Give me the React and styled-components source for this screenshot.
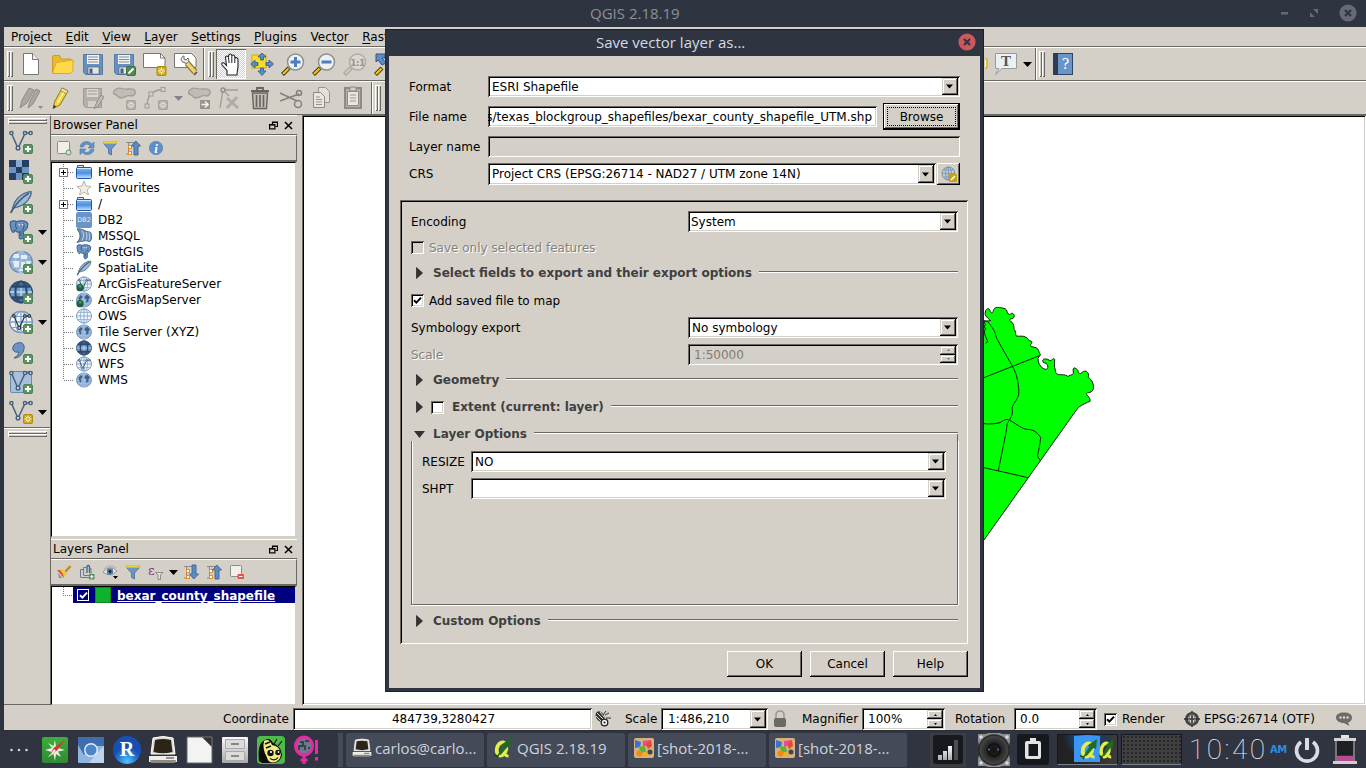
import React from "react";
import styled, { createGlobalStyle, css } from "styled-components";

const FACE = "#d4d0c8";
const SHADE = "#6a6864";
const NAVY = "#2f3540";

const sunken = css`
  box-shadow: inset 1px 1px 0 ${SHADE}, inset -1px -1px 0 #fff, inset 2px 2px 0 #000, inset -2px -2px 0 ${FACE};
`;
const raised = css`
  box-shadow: inset -1px -1px 0 #000, inset 1px 1px 0 ${FACE}, inset -2px -2px 0 ${SHADE}, inset 2px 2px 0 #fff;
`;

const Global = createGlobalStyle`
  *, *::before, *::after { box-sizing: border-box; }
  body { margin: 0; overflow: hidden; font: 12px/16px "DejaVu Sans", sans-serif; color: #000; }
  svg { display: block; flex: none; }
  u { text-underline-offset: 2px; text-decoration-skip-ink: none; text-decoration-thickness: 1px; }
`;

/* ---------- window shell ---------- */
const Desktop = styled.div`
  position: relative;
  width: 1366px;
  height: 768px;
  overflow: hidden;
  display: flex;
  flex-direction: column;
  background: ${NAVY};
`;
const TitleBar = styled.header`
  height: 27px;
  flex: none;
  display: flex;
  align-items: center;
  padding: 0 9px 1px 590px;
  font: 15px/20px "Open Sans", sans-serif;
  color: #8b909c;
`;
const WindowButtons = styled.div`
  margin-left: auto;
  display: flex;
  align-items: center;
  gap: 21px;
`;
const AppWindow = styled.main`
  height: 703px;
  flex: none;
  margin-left: 4px;
  background: ${FACE};
  display: flex;
  flex-direction: column;
`;
const MenuBar = styled.nav`
  height: 20px;
  flex: none;
  display: flex;
  gap: 13.5px;
  padding: 2px 0 0 7px;
  border-bottom: 1px solid ${SHADE};
  white-space: nowrap;
`;
const ToolBar = styled.div`
  height: 34px;
  flex: none;
  display: flex;
  align-items: center;
  border-top: 1px solid #fff;
  border-bottom: 1px solid ${SHADE};
`;
const ToolGroup = styled.div`
  height: 32px;
  width: ${(p) => (p.$w ? p.$w + "px" : "auto")};
  flex: none;
  display: flex;
  align-items: center;
  padding-left: ${(p) => p.$pl ?? 3}px;
  overflow: hidden;
  border-left: ${(p) => (p.$first ? "0" : "1px solid #fff")};
  border-right: ${(p) => (p.$last ? "0" : `1px solid ${SHADE}`)};
`;
const Spacer = styled.div`
  flex: 1;
`;
const Handle = styled.div`
  flex: none;
  display: flex;
  flex-direction: ${(p) => (p.$flat ? "column" : "row")};
  width: ${(p) => (p.$flat ? "39px" : "6px")};
  height: ${(p) => (p.$flat ? "6px" : "26px")};
  margin: ${(p) => p.$m || "0 2px 0 0"};
  &::before, &::after {
    content: "";
    flex: 1;
    box-shadow: inset 1px 1px 0 #fff, inset -1px -1px 0 ${SHADE};
  }
`;
const ToolSlot = styled.div`
  width: ${(p) => p.$w || 31}px;
  height: 30px;
  flex: none;
  display: flex;
  align-items: center;
  justify-content: center;
  opacity: ${(p) => (p.$off ? 0.75 : 1)};
  ${(p) =>
    p.$down &&
    css`
      background: repeating-conic-gradient(#fff 0 25%, ${FACE} 0 50%) 0 0 / 2px 2px;
      box-shadow: inset 1px 1px 0 ${SHADE}, inset -1px -1px 0 #fff;
    `}
`;
const Body = styled.div`
  height: 590px;
  flex: none;
  display: flex;
`;
const SideBar = styled.aside`
  width: 47px;
  flex: none;
  border-top: 1px solid #fff;
  border-right: 1px solid ${SHADE};
  border-bottom: 1px solid ${SHADE};
`;
const SideSlot = styled.div`
  height: 30px;
  display: flex;
  align-items: center;
  gap: 5px;
  padding-left: 5px;
`;
const SideEnd = styled.div`
  border-top: 1px solid ${SHADE};
  box-shadow: inset 0 1px 0 #fff;
  padding-top: 1px;
`;
const Docks = styled.section`
  width: 246px;
  flex: none;
  display: flex;
  flex-direction: column;
  gap: 2px;
`;
const Dock = styled.div`
  height: ${(p) => p.$h}px;
  flex: none;
  display: flex;
  flex-direction: column;
`;
const DockTitle = styled.div`
  height: 20px;
  flex: none;
  display: flex;
  align-items: center;
  padding: 0 4px 0 2px;
  border-top: 1px solid #fff;
  border-bottom: 1px solid ${SHADE};
  svg:first-of-type { margin-left: auto; margin-right: 6px; }
`;
const DockTools = styled.div`
  height: 27px;
  flex: none;
  display: flex;
  align-items: center;
  gap: 7px;
  padding-left: 5px;
  border-right: 1px solid ${SHADE};
  border-bottom: 2px solid ${SHADE};
  border-top: 1px solid #fff;
`;
const MenuArrow = styled.span`
  margin: 0 -2px;
`;
const Tree = styled.div`
  flex: 1;
  background: #fff;
  border-top: 1px solid #000;
  border-left: 1px solid #000;
  border-right: 1px solid ${FACE};
  border-bottom: 1px solid ${FACE};
  margin-right: 1px;
  padding-top: ${(p) => p.$top}px;
`;
const TreeRow = styled.div`
  height: 16px;
  display: flex;
  align-items: center;
`;
const TreeLabel = styled.span`
  padding-left: 6px;
  white-space: nowrap;
`;
const LayerRow = styled.div`
  flex: 1;
  height: 16px;
  overflow: hidden;
  display: flex;
  align-items: center;
  gap: 7px;
  padding-left: 4px;
  background: #000080;
  color: #fff;
`;
const LayerName = styled.b`
  padding-top: 1px;
  text-decoration: underline;
  text-decoration-skip-ink: none;
`;
const Swatch = styled.i`
  width: 16px;
  height: 16px;
  margin: 0 -1px;
  background: #0eb22c;
  border: 1px solid #0a8a20;
`;
const Canvas = styled.div`
  flex: 1;
  margin-left: 5px;
  background: #fff;
  overflow: hidden;
  ${sunken}
`;
const StatusBar = styled.footer`
  height: 25px;
  flex: none;
  display: flex;
  align-items: center;
  padding: 3px 14px 0 219px;
  white-space: nowrap;
`;
const StatusText = styled.span`
  width: ${(p) => p.$w}px;
  flex: none;
`;
const Indent = styled.span`
  display: inline-block;
  flex: none;
  width: ${(p) => (p.$w ? p.$w + "px" : "auto")};
  margin-left: ${(p) => (p.$w ? 0 : 10)}px;
`;

/* ---------- form parts ---------- */
const Box = styled.div`
  width: ${(p) => p.$w}px;
  height: ${(p) => p.$h || 21}px;
  flex: none;
  display: flex;
  align-items: center;
  justify-content: ${(p) => p.$align || "flex-start"};
  padding: 2px 2px 2px ${(p) => p.$pad ?? 4}px;
  background: ${(p) => (p.$off ? FACE : "#fff")};
  color: ${(p) => (p.$off ? "#807d78" : "#000")};
  overflow: hidden;
  white-space: nowrap;
  ${sunken}
`;
const DropButton = styled.div`
  width: 16px;
  align-self: stretch;
  margin-left: auto;
  padding-right: 1px;
  flex: none;
  display: flex;
  align-items: center;
  justify-content: center;
  background: ${FACE};
  ${raised}
`;
const SpinColumn = styled.div`
  width: 16px;
  align-self: stretch;
  margin-left: auto;
  flex: none;
  display: flex;
  flex-direction: column;
`;
const SpinButton = styled.div`
  flex: 1;
  display: flex;
  align-items: center;
  justify-content: center;
  background: ${FACE};
  ${raised}
`;
const Check = styled.div`
  width: 13px;
  height: 13px;
  flex: none;
  display: flex;
  align-items: center;
  justify-content: center;
  background: ${(p) => (p.$off ? FACE : "#fff")};
  ${sunken}
`;
const LayerCheck = styled.div`
  width: 12px;
  height: 12px;
  flex: none;
  border: 1px solid #fff;
  display: flex;
  align-items: center;
  justify-content: center;
`;
const PushButton = styled.button`
  width: ${(p) => p.$w}px;
  height: ${(p) => p.$h || 26}px;
  padding: 0;
  border: 0;
  background: ${FACE};
  font: inherit;
  display: flex;
  align-items: center;
  justify-content: center;
  box-shadow: inset -1px -1px 0 #000, inset 1px 1px 0 #fff, inset -2px -2px 0 ${SHADE};
  ${(p) =>
    p.$focus &&
    css`
      border: 1px solid #000;
      outline: 1px dotted #000;
      outline-offset: -5px;
    `}
`;

/* ---------- dialog ---------- */
const Dialog = styled.div`
  position: absolute;
  left: 385px;
  top: 29px;
  width: 599px;
  height: 663px;
  background: ${NAVY};
  border: 1px solid #1c2027;
  border-left-color: #262b34;
  padding: 0 3px 3px;
`;
const DialogTitle = styled.div`
  height: 26px;
  display: flex;
  align-items: center;
  padding: 0 4px 2px 207px;
  font: 15px/20px "Open Sans", sans-serif;
  color: #d3dae3;
  svg { margin-left: auto; }
`;
const DialogBody = styled.div`
  height: 632px;
  background: ${FACE};
  padding: 20px 12px 0 11px;
`;
const TopForm = styled.div`
  padding: 0 8px 0 9px;
`;
const Row = styled.div`
  height: ${(p) => p.$h}px;
  margin-bottom: ${(p) => p.$mb || 0}px;
  display: flex;
  align-items: center;
`;
const Label = styled.span`
  width: ${(p) => p.$w}px;
  flex: none;
  white-space: nowrap;
  ${(p) =>
    p.$off &&
    css`
      color: #85827c;
      text-shadow: 1px 1px 0 #fff;
    `}
`;
const Tail = styled.span`
  padding-right: 3px;
`;
const Frame = styled.div`
  height: 444px;
  margin-top: 15px;
  padding: 11px 10px 0 11px;
  ${sunken}
`;
const GroupHead = styled.div`
  height: 16px;
  margin: ${(p) => p.$m};
  display: flex;
  align-items: center;
  padding-left: 5px;
  font-weight: bold;
  color: #3f3f3f;
  white-space: nowrap;
  ${(p) =>
    p.$open &&
    css`
      background: linear-gradient(${SHADE}, ${SHADE}) 100% 6px / 1px 10px no-repeat;
    `}
  &::after {
    content: "";
    flex: 1;
    height: 2px;
    margin: 0 0 2px 7px;
    border-top: 1px solid ${SHADE};
    border-bottom: 1px solid #fff;
  }
`;
const GroupName = styled.span`
  padding-left: ${(p) => p.$pl || 10}px;
`;
const OptionBox = styled.div`
  height: 164px;
  padding: 10px 0 0 10px;
  border: 1px solid ${SHADE};
  border-top: 0;
  box-shadow: inset 1px 0 0 #fff, 0 1px 0 #fff, 1px 0 0 #fff;
`;
const DialogButtons = styled.div`
  display: flex;
  justify-content: flex-end;
  gap: 8px;
  padding-top: 7px;
`;

/* ---------- task bar ---------- */
const TaskBar = styled.div`
  height: 38px;
  display: flex;
  align-items: center;
  padding-left: 8px;
  background: #2f3440;
  border-top: 1px solid #2a2f39;
`;
const Launchers = styled.div`
  display: flex;
  align-items: center;
  gap: 6px;
  width: 330px;
  flex: none;
  svg:first-child { margin-right: 4px; }
`;
const Divider = styled.i`
  width: 5px;
  height: 34px;
  margin-right: 3px;
  background: #454a57;
`;
const Task = styled.div`
  width: 138px;
  height: 34px;
  flex: none;
  margin-right: 3px;
  padding: 0 0 3px 6px;
  display: flex;
  align-items: center;
  gap: ${(p) => p.$gap || 3}px;
  background: #454a59;
  border-radius: 2px;
  color: #cdd3de;
  font: 15px/20px "Open Sans", sans-serif;
  white-space: nowrap;
`;
const Tray = styled.div`
  flex: 1;
  display: flex;
  align-items: center;
  padding-left: 20px;
`;
const Clock = styled.div`
  width: 76px;
  margin-left: 7px;
  font: 100 28px/32px Roboto, sans-serif;
  color: #eef1f6;
  display: flex;
  justify-content: space-between;
`;
const Meridiem = styled.span`
  margin: 0 8px 0 5px;
  width: 16px;
  font: bold 10px/12px "DejaVu Sans", sans-serif;
  letter-spacing: -0.6px;
  color: #2d8ce0;
`;
const Pager = styled.div`
  width: 61px;
  height: 31px;
  flex: none;
  margin-left: ${(p) => p.$ml}px;
  border: 1px solid #15181d;
  border-bottom: 1px solid #7c8088;
  display: flex;
  justify-content: center;
  background: ${(p) =>
    p.$active
      ? "radial-gradient(ellipse at 50% 0, #3aa0ff 0, #1c3c5c 35%, transparent 60%), linear-gradient(90deg, #222 0 25%, #3c3c3c)"
      : "radial-gradient(#262626 30%, transparent 50%) 0 0 / 4px 4px, #404040"};
`;

/* ---------- small drawings ---------- */
const Pic = ({ w = 24, h = w, box, children }) => (
  <svg width={w} height={h} viewBox={box || `0 0 ${w} ${h}`} fill="none">
    {children}
  </svg>
);
const Down = ({ w = 9, c = "#000" }) => (
  <Pic w={w} h={5} box="0 0 9 5"><path d="M0 0H9L4.5 5Z" fill={c} /></Pic>
);
const Tick = ({ c = "#000" }) => (
  <Pic w={9} h={9}><path d="M1 4.2 3.4 6.6 8 1.6" stroke={c} strokeWidth="2" /></Pic>
);
const Combo = ({ w, h, children, pad, off }) => (
  <Box $w={w} $h={h} $pad={pad} $off={off}>
    {children}
    <DropButton><Down w={7} /></DropButton>
  </Box>
);
const Spin = ({ w, h, off, pad = 6, children }) => (
  <Box $w={w} $h={h} $off={off} $pad={pad}>
    {children}
    <SpinColumn>
      <SpinButton><Pic w={3} h={2}><path d="M0 2H3L1.5 0Z" fill={off ? "#777" : "#000"} /></Pic></SpinButton>
      <SpinButton><Pic w={3} h={2}><path d="M0 0H3L1.5 2Z" fill={off ? "#777" : "#000"} /></Pic></SpinButton>
    </SpinColumn>
  </Box>
);
const Plus = () => (
  <g>
    <rect x="14.5" y="14.5" width="9" height="9" rx="1.5" fill="#5a9460" stroke="#4c8352" />
    <path d="M19 16v6M16 19h6" stroke="#fff" strokeWidth="2" />
  </g>
);
const Star = ({ x = 14, y = 14, gray }) => (
  <g transform={`translate(${x} ${y})`}>
    <rect x=".5" y=".5" width="9" height="9" rx="1" fill={gray ? "#a5a29c" : "#cca30e"} stroke={gray ? "#97948e" : "#b08c0a"} />
    <path d="M5 1.5v7M1.5 5h7M2.5 2.5l5 5M7.5 2.5l-5 5" stroke="#fff" />
    <circle cx="5" cy="5" r="1" fill={gray ? "#a5a29c" : "#cca30e"} />
  </g>
);
const VectorV = ({ c = "#43617f" }) => (
  <g stroke={c} strokeWidth="1.5">
    <path d="M3 4.5 8.2 16.5M9.8 16.5 15.5 4.5M17 3h3" />
    <circle cx="2.4" cy="3" r="1.6" fill="#eef3f8" /><circle cx="16" cy="3" r="1.6" fill="#eef3f8" />
    <circle cx="21.6" cy="3" r="1.6" fill="#eef3f8" /><circle cx="9" cy="18" r="1.8" fill="#eef3f8" />
  </g>
);
const GlobeShape = ({ kind }) => {
  const dark = kind === "dark";
  const light = kind === "light";
  const line = dark ? "#2c4a6e" : light ? "#7ea4cf" : "#a9c3e0";
  return (
    <g>
      <ellipse cx="12" cy="12" rx="11.3" ry="10.6" fill={dark ? "#6f9acb" : light ? "#f2f6fa" : "#8fb0d6"} stroke={dark ? "#2c4a6e" : "#6d8fb8"} strokeWidth="1.3" />
      <path d="M1 12h22M12 1.5v21" stroke={dark ? "#c9daec" : line} strokeWidth="1.3" />
      <ellipse cx="12" cy="12" rx="5.6" ry="10.6" stroke={line} strokeWidth={dark ? 2 : 1.2} />
      <path d="M3 6.5h18M3 17.5h18" stroke={line} strokeWidth={dark ? 2.5 : 1.2} />
      {dark && <path d="M6 2.5h12l3 4H3ZM6 21.5h12l3-4H3Z" fill="#2c4a6e" opacity=".7" />}
      {kind === "land" && (
        <path d="M4 8 7 5l3 1-1 3-2 1 1 3-1 3-2-3-1-3ZM13 6l4-2 4 4-2 2 0 3-3 4-1-3 1-3-3-1Z" fill="#3e6186" />
      )}
      {kind === "image" && (
        <path d="M5 4h5v4H4ZM12 5h6v4h-6ZM4 11h6v6H5ZM12 12h4v6h-4ZM17.500 11h4v4h-4ZM10 19h6v2h-6Z" fill="#e4edf6" />
      )}
    </g>
  );
};
const Feather = () => (
  <g>
    <path d="M3 22C4 11 11 3 22 1.500C23 6 20 8 19 10 15 16 9 17 5 18" fill="#9fbbda" stroke="#43617f" strokeWidth="1.2" />
    <path d="M1.500 23C6 15 12 8 20 3" stroke="#43617f" strokeWidth="1.6" />
  </g>
);
const Elephant = () => (
  <g>
    <path d="M2 2C5 .5 8 1.500 9 2 12 .5 20 .5 22 4 22.500 9 20 12 17 13.500V20C16 23 12 23 12 20V14C9 15 8 13 7 12 6 16 4 15 3 12 1.500 8 1 4 2 2Z" fill="#6b93c2" stroke="#3d5f86" strokeWidth="1.4" />
    <path d="M8.500 3C7 6 8 9 9.500 11M17 4c2 3 0 7-2 8.500M14 13v6" stroke="#3d5f86" strokeWidth="1.4" />
    <circle cx="12" cy="5.500" r=".9" fill="#fff" /><circle cx="16" cy="5.500" r=".9" fill="#fff" />
  </g>
);
const TreePic = ({ kind }) => {
  switch (kind) {
    case "folder":
      return <Pic w={16}><path d="M1.500 4V1.500h6V4" fill="#dceaf8" stroke="#1d5fb4" /><rect x=".5" y="3.500" width="15" height="11" rx="1" fill="url(#folder)" stroke="#1b58ae" /><path d="M1 4.500h14" stroke="#d5e8fb" /></Pic>;
    case "star":
      return <Pic w={16}><path d="m8 1 2 5 5.200.4-4 3.400 1.300 5.100L8 12.200 3.500 14.900l1.300-5.100-4-3.400L6 6Z" fill="#efeee6" stroke="#b6b5a0" /></Pic>;
    case "db2":
      return <Pic w={16}><rect width="16" height="16" rx="2" fill="#6a94c6" /><text x="8" y="9.500" textAnchor="middle" fontSize="6.500" fontFamily="DejaVu Sans" fill="#eaf1f8">DB2</text></Pic>;
    case "mssql":
      return <Pic w={16}><path d="M1 1C6 0 9 4 14 4 16.500 7 16 11 14 13.500 10 12 6 13 1 14.500 5 10 5 6 1 1Z" fill="#6b8fbb" stroke="#45668c" /><path d="M6 2.500c2 3 2 6 0 10M10 4c1.500 3 1 6 0 8.500M13 4.500c1 3 1 5 0 8" stroke="#c8d8ea" /></Pic>;
    case "pg":
      return <Pic w={16} box="0 0 24 24"><Elephant /></Pic>;
    case "feather":
      return <Pic w={16} box="0 0 24 24"><Feather /></Pic>;
    default: {
      const [globe, extra] = kind.split("+");
      return (
        <Pic w={16} box="0 0 24 24">
          <GlobeShape kind={globe} />
          {extra && extra.includes("v") && <g transform="translate(3 4) scale(.8)"><VectorV c="#2f4862" /></g>}
          {extra && extra.includes("e") && <g><circle cx="6" cy="17.500" r="5.500" fill="#1d5d4a" /><path d="M3 15l4-2 2 3-3 2ZM6 21l4-2" fill="#3da33a" /></g>}
        </Pic>
      );
    }
  }
};
const Floppy = ({ c = "#6590c2", children }) => (
  <Pic w={24}>
    <path d="M2.500 2.500h19v20h-17l-2-2Z" fill={c} stroke="#5a7ba5" />
    <rect x="6" y="3" width="12" height="9" fill="#f4f4f2" />
    <path d="M7 5h10M7 7.500h10M7 10h10" stroke="#8a8a88" />
    <rect x="7" y="15" width="11" height="7" fill="#e4e4e2" stroke="#555" strokeWidth=".6" />
    <rect x="8.500" y="16.500" width="3" height="5" fill="#3f6288" />
    {children}
  </Pic>
);
const Lens = ({ sign, gray }) => (
  <Pic w={24}>
    <path d="M1.500 22.500 8 16" stroke={gray ? "#8f8c87" : "#3a3000"} strokeWidth="4" />
    <path d="M2 22 7.500 16.500" stroke={gray ? "#cac7c0" : "#f3bf1c"} strokeWidth="2.400" />
    <circle cx="14.500" cy="10" r="8" fill={gray ? "#dedbd5" : "#eef1f2"} stroke={gray ? "#a5a29c" : "#8b9092"} strokeWidth="1.500" />
    {sign === "1" ? (
      <text x="14.500" y="13.500" textAnchor="middle" fontSize="9" fontWeight="bold" fontFamily="DejaVu Sans" letterSpacing="-.6" fill="#85827d">1:1</text>
    ) : (
      <path d={sign === "+" ? "M14.500 5v10M9.500 10h10" : "M9.500 10h10"} stroke="#4d7fba" strokeWidth="3" />
    )}
  </Pic>
);
const Funnel = () => (
  <Pic w={16}><path d="M1.500 3.500h13L9.500 9v6l-3-1.500V9Z" fill="#6d95c4" stroke="#557aa5" /><path d="M1 2.500h14" stroke="#d9b81c" strokeWidth="3" /><path d="M2 2.200h12" stroke="#f6e04c" /></Pic>
);
const TreeArrow = ({ up }) => (
  <Pic w={16}>
    <path d="M1 2.500h8M3.500 3v10M1 14h2" stroke="#8a8a86" />
    <rect x="3.500" y="5.500" width="3" height="3" fill="#fff" stroke="#f08a1c" /><rect x="3.500" y="11.500" width="3" height="3" fill="#fff" stroke="#f08a1c" />
    <path transform={up ? "" : "matrix(1 0 0 -1 0 16)"} d="M10.800 1 15.500 6H13v9H9V6H6.500Z" fill="#5b8dc4" stroke="#3c638f" strokeWidth=".9" />
  </Pic>
);
const Blob = ({ children }) => (
  <Pic w={24}><path d="M2 8C0 4 6 1 10 2.500 14 4 18 2 22 3.500 25 7 22 10 19 10 15 8 13 12 9 12 5 12 7 9 2 8Z" fill="#bab7b0" stroke="#8f8c86" strokeWidth="1.300" />{children}</Pic>
);
const FloatPic = () => (
  <Pic w={9}><path d="M3 1.500h5.500V5.500H6.500M3.500 1v2.500M3 1h6" stroke="#000" strokeWidth="1.200" /><rect x=".6" y="3.600" width="5.300" height="4.300" stroke="#000" strokeWidth="1.200" /><path d="M0 4h6" stroke="#000" /></Pic>
);
const ClosePic = () => <Pic w={9}><path d="M1 1 8 8M8 1 1 8" stroke="#000" strokeWidth="1.500" /></Pic>;
const RoundClose = ({ c, x = NAVY }) => (
  <Pic w={18}><circle cx="9" cy="9" r="8.600" fill={c} /><path d="M6 6l6 6M12 6l-6 6" stroke={x} strokeWidth="2.200" /></Pic>
);
const Right = () => <Pic w={7} h={12}><path d="M.5 .5 6.500 6 .5 11.500Z" fill="#333" stroke="#111" strokeWidth=".6" /></Pic>;
const QgisShape = () => (
  <g>
    <ellipse cx="8.500" cy="11" rx="4.600" ry="6.800" stroke="#e3ee4a" strokeWidth="3.800" transform="rotate(14 8.500 11)" />
    <path d="M8 14c3 0 4 4.500 7.500 4" stroke="#e3ee4a" strokeWidth="3" />
    <path d="M4 18 10.500 7.500 8.500 6.500 18 0 17 10 14.500 9 8 16.500Z" fill="#1f6b26" />
    <path d="M1 17l4 1-1 2" stroke="#174f1d" strokeWidth="1.500" />
  </g>
);
const PaintPic = () => (
  <Pic w={20}><rect width="20" height="20" rx="2" fill="#d8b07a" /><path d="M1 2 7 4 6 9 1 10Z" fill="#3574d4" /><path d="M9 3l8-1-2 5-6 2Z" fill="#e64b9c" /><path d="M12 6l5-4 1 6-4 3Z" fill="#e84830" /><path d="M5 8l6 1 1 5-6 1Z" fill="#4fb73c" /><circle cx="5.500" cy="15.500" r="3" fill="#f58a12" /><circle cx="11" cy="16" r="2.200" fill="#f5b112" /><circle cx="16" cy="14" r="2.500" fill="#3c4658" /></Pic>
);
const TerminalPic = ({ w }) => (
  <Pic w={w} box="0 0 30 28"><path d="M5 2Q15-1 25 2l2 16H3Z" fill="#dedbd2" stroke="#fff" /><path d="M7 4Q15 2 23 4l1.500 12Q15 18.500 5.500 16Z" fill="#2b2519" /><path d="M1 20h28v6H1Z" fill="#f0eee8" /><path d="M2 24h26l-1 3H3Z" fill="#8d8a84" /><path d="M18 22h8" stroke="#333" /></Pic>
);

const menus = [["Pro", "j", "ect"], ["", "E", "dit"], ["", "V", "iew"], ["", "L", "ayer"], ["", "S", "ettings"], ["", "P", "lugins"], ["Vect", "o", "r"], ["", "R", "aster"]];
const browserRows = [
  ["Home", "folder", true], ["Favourites", "star"], ["/", "folder", true], ["DB2", "db2"], ["MSSQL", "mssql"], ["PostGIS", "pg"],
  ["SpatiaLite", "feather"], ["ArcGisFeatureServer", "light+ve"], ["ArcGisMapServer", "land+e"], ["OWS", "light"],
  ["Tile Server (XYZ)", "land"], ["WCS", "dark"], ["WFS", "light+v"], ["WMS", "land"],
];
const sideTools = [
  { pic: <VectorV /> },
  { pic: <g><rect x="0" y="0" width="20" height="20" fill="#6b93c5" /><path d="M0 0h7v7H0ZM13 0h7v7h-7ZM7 7h6v6H7ZM0 13h7v7H0ZM13 13h7v7h-7Z" fill="#263f5e" /><path d="M7 0h6v7H7Z" fill="#88a9d2" /></g> },
  { pic: <Feather /> },
  { pic: <g transform="scale(.85)"><Elephant /></g>, menu: true },
  { pic: <GlobeShape kind="image" />, menu: true },
  { pic: <GlobeShape kind="dark" /> },
  { pic: <g><GlobeShape kind="light" /><g transform="translate(3 3.500) scale(.8)"><VectorV c="#26333f" /></g></g>, menu: true },
  { pic: <path d="M9 3C14 1 17 6 14 12 12 16 9 18 5 18c3-2 5-4 5-6C5 13 3 10 4 7 5 4 7 3 9 3Z" fill="#6b93c5" stroke="#43617f" /> },
  { pic: <g><rect x="1.500" y="1.500" width="21" height="21" rx="1.500" fill="#a9c0da" stroke="#6b89ab" /><VectorV c="#43617f" /></g> },
  { pic: <VectorV />, menu: true, star: true },
];

const Expander = ({ open, last }) => (
  <Pic w={24} h={16}>
    <path d={`M11.500 0V${last ? 8 : 16}M12 8.500h9`} stroke="#777" strokeDasharray="1 1" />
    {open && <g><rect x="7.500" y="4.500" width="8" height="8" fill="#fff" stroke="#777" /><path d="M9 8.500h5M11.500 6v5" stroke="#000" /></g>}
  </Pic>
);

const CountyMap = () => (
  <svg width="1062" height="589" viewBox="302 115 1062 589" fill="none">
    <g transform="translate(960 290) scale(.33333)" stroke="#101810" strokeWidth="3" strokeLinejoin="round">
      <path fill="#0f0" d="M60 95 92 92C85 85 72 78 76 66C78 55 88 52 90 62C92 70 98 72 100 62C103 50 112 52 122 53L135 56C142 60 140 66 145 72C150 78 152 68 158 70C165 74 164 84 156 86C148 86 146 92 152 94C160 98 162 106 162 118C168 122 166 132 168 138C178 140 190 136 198 142C206 146 206 154 212 153C218 154 216 160 212 164C210 172 220 170 228 173C236 176 236 186 241 194L234 205C234 220 240 230 252 237C262 240 266 234 262 224C258 216 248 222 248 212C250 204 262 206 270 212C276 212 280 202 284 208C284 220 282 230 286 240C286 250 290 255 304 254C312 254 322 256 324 260C330 252 342 258 340 246C338 238 340 232 346 234C350 240 356 238 354 246C360 254 362 250 368 246C376 240 384 244 386 256C382 262 390 264 396 274C402 284 402 298 396 304C388 310 376 306 380 314C386 320 392 326 390 334C380 338 370 342 355 352L72 750H60Z" />
      <path d="M72 92C85 93 90 102 104 125L110 145L158 230C172 255 178 290 176 315C168 335 160 340 156 355C160 370 154 380 148 392C138 400 142 410 138 428L115 542M72 263 241 196M72 401C90 404 110 400 120 398C135 388 142 385 152 393C170 400 175 412 200 418C225 418 232 430 242 442C240 465 236 480 232 498L240 511M72 533 204 563M72 95l4 8-3 6 3 8-3 8 2 10 8 20-6 5" />
    </g>
  </svg>
);

const Defs = () => (
  <svg width="0" height="0" style={{ position: "absolute" }}>
    <defs>
      <linearGradient id="folder" x2="0" y2="1"><stop stopColor="#8cbdf2" /><stop offset=".5" stopColor="#4c8fe0" /><stop offset="1" stopColor="#cfe4fa" /></linearGradient>
      <linearGradient id="green" x2="0" y2="1"><stop stopColor="#3fae3b" /><stop offset="1" stopColor="#2f8a34" /></linearGradient>
      <radialGradient id="blue" cy=".9"><stop stopColor="#4cc4ff" /><stop offset="1" stopColor="#174fb4" /></radialGradient>
      <linearGradient id="metal" x2="0" y2="1"><stop stopColor="#fafafa" /><stop offset="1" stopColor="#a9a9a9" /></linearGradient>
      <radialGradient id="cone"><stop stopColor="#111" /><stop offset=".5" stopColor="#252525" /><stop offset="1" stopColor="#4a4a4a" /></radialGradient>
    </defs>
  </svg>
);

function TopToolbars() {
  return (
    <>
      <ToolBar>
        <ToolGroup $first $w={200}>
          <Handle />
          <ToolSlot><Pic><path d="M4.500 1.500h9l6 6v15h-15Z" fill="#fff" stroke="#777" /><path d="M13.500 1.500v6h6" stroke="#777" fill="#eee" /></Pic></ToolSlot>
          <ToolSlot><Pic><path d="M2.500 22V5l1-1.500h6L11 7h10v4" fill="#e8bc2c" stroke="#c99c1c" /><path d="M2.500 21.500 6 10.500 23 8v11L20 21.500Z" fill="#ffd94c" stroke="#d8ac28" /></Pic></ToolSlot>
          <ToolSlot><Floppy /></ToolSlot>
          <ToolSlot><Floppy><rect x="14.500" y="14.500" width="9" height="9" rx="1" fill="#4f8a56" stroke="#3c7344" /><path d="M16.500 21.500l5-5" stroke="#fff" strokeWidth="2" /></Floppy></ToolSlot>
          <ToolSlot><Pic><path d="M.5 1.500h17l4.500 4.500v9.500H.5Z" fill="#fff" stroke="#777" /><path d="M17.500 1.500V6H22" stroke="#777" /><Star x={13.500} y={14} /></Pic></ToolSlot>
          <ToolSlot><Pic><path d="M.5 1.500h17l4.500 4.500v9.500H.5Z" fill="#fff" stroke="#777" /><path d="M13 11 21 20" stroke="#8a7424" strokeWidth="6" /><path d="M13 11 21 20" stroke="#e9d27a" strokeWidth="3.500" /><path d="M8 9.500C6 7 8 4 10 4v3l2 1 2-2C16 9 14 11 12 11.500Z" fill="#e8e8e8" stroke="#666" /><path d="m20 23 3-3" stroke="#444" strokeWidth="1.500" /></Pic></ToolSlot>
        </ToolGroup>
        <ToolGroup $last $w={181}>
          <Handle />
          <ToolSlot $w={30} $down><Pic><path d="M8 23V18.500L3 13C2 10.500 4.500 10 6 12L7.500 13.500 6.500 5.500C6.500 3.500 9 3.500 9.300 5.500L9.800 3.500C10 1.500 12.500 1.500 12.800 3.500V4.500C13 2.500 15.500 2.500 15.800 4.500V6.500C16.500 5 19 5.500 19 7.500V14C19 17 18 18.500 18 23Z" fill="#fff" stroke="#222" strokeWidth="1.100" /><path d="M9.500 5.500l.6 5.500M12.800 4.500V11M15.800 6.500V11" stroke="#222" /></Pic></ToolSlot>
          <ToolSlot><Pic><rect x="2" y="3" width="14" height="13" fill="#fbdf25" stroke="#cda90f" /><path d="M12 1l4 4h-2.500v3h-3V5H8ZM12 23.500l4-4.500h-2.500v-3h-3v3H8ZM.8 12 5 8v2.500h3v3H5V16ZM23.500 12 19 8v2.500h-3v3h3V16Z" fill="#5b8dc8" stroke="#2f5484" strokeWidth=".8" /></Pic></ToolSlot>
          <ToolSlot><Lens sign="+" /></ToolSlot>
          <ToolSlot><Lens sign="-" /></ToolSlot>
          <ToolSlot $off><Lens sign="1" gray /></ToolSlot>
          <ToolSlot><Pic><path d="M1.500 22.500 8 16" stroke="#3a3000" strokeWidth="4" /><path d="M2 22 7.500 16.500" stroke="#f3bf1c" strokeWidth="2.400" /><path d="M2 2h9v4H8l4 5-4 2-4-5-2 2Z" fill="#5b8dc8" stroke="#2f5484" /></Pic></ToolSlot>
        </ToolGroup>
        <Spacer />
        <ToolGroup $first $w={54}>
          <Pic w={4} h={24}><path d="M-3 6.500h3q2 0 2 2v6q0 2-2 2h-3" fill="#fff6a0" stroke="#d8b416" strokeWidth="1.500" /></Pic>
          <ToolSlot $w={34}><Pic><path d="M1.500 1.500h21v15H8L1.500 22.500 5 16.500H1.500Z" fill="#eaf1f5" stroke="#999" /><text x="12" y="14" textAnchor="middle" fontFamily="Liberation Serif" fontWeight="bold" fontSize="15" fill="#555">T</text></Pic></ToolSlot>
          <Down />
        </ToolGroup>
        <ToolGroup $last $w={330} $pl={2}>
          <Handle $m="0 6px 0 0" />
          <Pic><rect x="2.500" y="1.500" width="19" height="21" fill="#6a95c8" stroke="#2c4560" /><rect x="2" y="1" width="5" height="22" fill="#2c3e50" /><text x="14.500" y="16.500" textAnchor="middle" fontFamily="DejaVu Serif" fontSize="14" fill="#fff">?</text></Pic>
        </ToolGroup>
      </ToolBar>
      <ToolBar>
        <ToolGroup $first $w={368}>
          <Handle />
          <ToolSlot $off><Pic><path d="M1 22 3 14 10 2l5 2-7 13ZM9 22l2-7 6-12 4 2-7 13Z" fill="#9c9993" stroke="#7b7873" /><path d="M19 20h5l-2.500 3Z" fill="#777" /></Pic></ToolSlot>
          <ToolSlot><Pic><path d="M3 22.500 4.500 16 12 2l6 3-8 14Z" fill="#f0d23c" stroke="#8e7a1c" /><path d="M7.500 17 15 4" stroke="#fff6b0" strokeWidth="1.500" /><path d="m12 2 6 3-1.500 2.500-6-3Z" fill="#e8e4da" stroke="#8e7a1c" strokeWidth=".7" /><path d="m3 22.500 1-3.500 2 1.500Z" fill="#222" /></Pic></ToolSlot>
          <ToolSlot $off><Pic><path d="M2.500 2.500h18v19h-16l-2-2Z" fill="#a8a59f" stroke="#8b8883" /><path d="M6 3h11v8H6Z" fill="#dedbd5" /><path d="M7 5h9M7 8h9" stroke="#8b8883" /><path d="M7 15h8v6H7Z" fill="#d4d0c8" /><path d="m13 23 2-5 5-9 3 2-6 9Z" fill="#b9b6b0" stroke="#7f7c77" /></Pic></ToolSlot>
          <ToolSlot $off><Blob><Star gray /></Blob></ToolSlot>
          <ToolSlot $off $w={34}><Pic><path d="M3 20C3 10 8 4 19 3.500" stroke="#8f8c86" strokeWidth="1.300" /><rect x="1" y="18" width="4" height="4" fill="#d4d0c8" stroke="#8f8c86" /><rect x="5" y="6" width="4" height="4" fill="#d4d0c8" stroke="#8f8c86" /><rect x="17" y="1.500" width="4" height="4" fill="#d4d0c8" stroke="#8f8c86" /><Star gray /></Pic></ToolSlot>
          <ToolSlot $w={10}><Down c="#85828a" /></ToolSlot>
          <ToolSlot $off><Blob><rect x="13" y="14" width="10" height="9" fill="#85827c" /><path d="M14.500 18.500h6M18 15.500l3 3-3 3" stroke="#fff" strokeWidth="1.600" /></Blob></ToolSlot>
          <ToolSlot $off $w={30}><Pic><path d="M6 4 3 22M8 4h13M8 6l4 4" stroke="#8f8c86" strokeWidth="1.300" /><circle cx="6" cy="4" r="2" fill="#d4d0c8" stroke="#77746f" strokeWidth="1.300" /><path d="m10 22 10-11M10 12l11 10" stroke="#a5a29c" strokeWidth="3" /></Pic></ToolSlot>
          <ToolSlot><Pic><path d="M4.500 7h15l-1 15.500h-13Z" stroke="#67645f" strokeWidth="1.400" fill="#c4c0b8" /><path d="M3 5h18M9 4V2h6v2" stroke="#67645f" strokeWidth="1.800" /><path d="M8.500 9v12M12 9v12M15.500 9v12" stroke="#67645f" strokeWidth="1.600" /></Pic></ToolSlot>
          <ToolSlot><Pic><path d="M1 7 18 15M1 15 20 8" stroke="#85827c" strokeWidth="1.500" /><circle cx="20" cy="7" r="2.500" stroke="#85827c" strokeWidth="1.500" /><circle cx="19" cy="18" r="3.500" stroke="#85827c" strokeWidth="1.500" /></Pic></ToolSlot>
          <ToolSlot $off><Pic><path d="M8.500 1.500h7l4 4v11h-11Z" fill="#e8e5df" stroke="#85827c" /><path d="M3.500 6.500h7l4 4v11h-11Z" fill="#f1efea" stroke="#77746f" /><path d="M6 11h4M6 13.500h6M6 16h6M6 18.500h6" stroke="#85827c" /></Pic></ToolSlot>
          <ToolSlot $off><Pic><rect x="4" y="2" width="16" height="20" stroke="#77746f" strokeWidth="2" fill="#aaa7a1" /><path d="M6.500 5.500h11v14h-11Z" fill="#f1efea" stroke="#77746f" /><path d="M9 1h6v4H9Z" fill="#d4d0c8" stroke="#77746f" /><path d="M9 9h6M9 12h6M9 15h6" stroke="#85827c" /></Pic></ToolSlot>
        </ToolGroup>
        <ToolGroup $last $w={12} $pl={2}><Handle /></ToolGroup>
      </ToolBar>
    </>
  );
}

function Panels() {
  return (
    <Docks>
      <Dock $h={422}>
        <DockTitle>Browser Panel<FloatPic /><ClosePic /></DockTitle>
        <DockTools>
          <Pic w={16}><rect x="1.500" y="1.500" width="12" height="12" rx="1" fill="#f0efea" stroke="#8c8c88" /><circle cx="12.500" cy="12.500" r="2.500" fill="#cfe3cf" stroke="#5a9460" /></Pic>
          <Pic w={16}><path d="M1 7C2 1 10 0 12.500 4L15 2v6H9l2-2C9 3 5 4 4.500 7ZM15 9.500C14 15 6 16 3.500 12.500L1 14.500V9h6l-2 2c2 2.500 5.500 1.500 6.500-1.500Z" fill="#5f92cc" stroke="#4b77aa" strokeWidth=".6" /></Pic>
          <Funnel />
          <TreeArrow up />
          <Pic w={16}><circle cx="8" cy="8" r="6.700" fill="#5b8fd0" stroke="#7b8fa8" /><text x="8" y="12.500" textAnchor="middle" fontFamily="Liberation Serif" fontStyle="italic" fontWeight="bold" fontSize="13" fill="#fff">i</text></Pic>
        </DockTools>
        <Tree $top={1}>
          {browserRows.map(([name, pic, open], i) => (
            <TreeRow key={i}>
              <Expander open={open} last={i === browserRows.length - 1} />
              <TreePic kind={pic} />
              <TreeLabel>{name}</TreeLabel>
            </TreeRow>
          ))}
        </Tree>
      </Dock>
      <Dock $h={166}>
        <DockTitle>Layers Panel<FloatPic /><ClosePic /></DockTitle>
        <DockTools>
          <Pic w={16}><path d="m9 8 5.500-6" stroke="#c08b28" strokeWidth="2.500" /><path d="M1 6 7 5l4 5-4 4Z" fill="#f0c63c" /><path d="M1 6l3 0 3 4 1 4Z" fill="#e2503c" /><path d="m2 9 4 5-3 0Z" fill="#5b8fd0" /></Pic>
          <Pic w={16}><path d="M1.500 13V5.500H4M4.500 11V3.500H7M1.500 13.500H10M4.500 11.500H12V4" stroke="#6c7a88" /><path d="M8 9V2.500q1.500-2 2.500 0V9" stroke="#35618f" strokeWidth="1.300" /><rect x="10" y="10" width="5.500" height="5.500" fill="#5a9460" /><path d="M12.700 11v3.500M11 12.700h3.500" stroke="#fff" /></Pic>
          <Pic w={16}><path d="M1 8Q8 0 15 7 8 14 1 8Z" fill="#f2f2f0" stroke="#8c8c88" /><circle cx="8" cy="7.500" r="3.300" fill="#4f7cb0" /><circle cx="8" cy="7.500" r="1.400" fill="#16283c" /><path d="M2 5Q8-1 14 4" stroke="#aaa" /><path d="M11 12h5l-2.500 3Z" fill="#000" /></Pic>
          <Funnel />
          <Pic w={16}><text x="0" y="11" fontFamily="DejaVu Serif" fontSize="13" fill="#7a3b78">ε</text><path d="M7.500 8.500h7.500L12.500 11v4.500h-2.500V11Z" fill="#e2e0da" stroke="#8c8c88" /></Pic>
          <MenuArrow><Down /></MenuArrow>
          <TreeArrow />
          <TreeArrow up />
          <Pic w={16}><rect x="1.500" y="1.500" width="11" height="11" rx="1" fill="#f0efea" stroke="#8c8c88" /><rect x="8.500" y="10" width="6.500" height="5" rx="1" fill="#e8504c" /><path d="M10 12.500h3.500" stroke="#fff" /></Pic>
        </DockTools>
        <Tree $top={0}>
          <TreeRow>
            <Pic w={21} h={16}><path d="M11.500 0V8.500h9" stroke="#777" strokeDasharray="1 1" /></Pic>
            <LayerRow><LayerCheck><Tick c="#fff" /></LayerCheck><Swatch /><LayerName>bexar_county_shapefile</LayerName></LayerRow>
          </TreeRow>
        </Tree>
      </Dock>
    </Docks>
  );
}

function Status() {
  return (
    <StatusBar>
      <StatusText $w={70}>Coordinate</StatusText>
      <Box $w={299} $h={22} $align="center">484739,3280427</Box>
      <StatusText $w={33}>
        <Pic w={33} h={18}><ellipse cx="8" cy="6.500" rx="4" ry="5.500" fill="#333" transform="rotate(-30 8 6.500)" /><path d="M5 3l6 6M4 6l5 5M8 2l4 5" stroke="#ddd" /><circle cx="12.500" cy="12.500" r="3.300" fill="#eee" stroke="#222" strokeWidth="1.300" /><circle cx="12.500" cy="12.500" r="1" fill="#222" /><path d="m13 5 4-2M14 8h5M11 5l3-4" stroke="#333" /></Pic>
      </StatusText>
      <StatusText $w={36}>Scale</StatusText>
      <Combo w={107} h={22} pad={7}>1:486,210</Combo>
      <StatusText $w={34}>
        <Pic w={34} h={18}><path d="M8 9V5q0-4 4-4T16 5v4" stroke="#999" strokeWidth="1.600" /><rect x="6" y="8" width="12" height="9" rx="2" fill="#6c6a66" /></Pic>
      </StatusText>
      <StatusText $w={60}>Magnifier</StatusText>
      <Spin w={83} h={22}>100%</Spin>
      <StatusText $w={59}><Indent>Rotation</Indent></StatusText>
      <Indent $w={10} />
      <Spin w={83} h={22}>0.0</Spin>
      <Indent $w={7} />
      <Check><Tick /></Check>
      <StatusText $w={67}><Indent $w={5} />Render</StatusText>
      <Pic w={16}><circle cx="8" cy="8" r="5.500" stroke="#444" strokeWidth="3" /><path d="M8 0v16M0 8h16" stroke="#333" strokeWidth="1.500" /><ellipse cx="8" cy="8" rx="3" ry="5" stroke="#777" /></Pic>
      <Indent $w={4} />
      EPSG:26714 (OTF)
      <Spacer />
      <Pic w={16}><path d="M8 1.500c5 0 8 2 8 5s-2 4.500-4 5l1.500 3.500L8 12C3 12 0 9.500 0 6.500s3-5 8-5Z" fill="#6e6b67" /><path d="M3.500 6.500h2M7 6.500h2M10.500 6.500h2" stroke="#eee" strokeWidth="2" /></Pic>
    </StatusBar>
  );
}

function SaveDialog() {
  return (
    <Dialog>
      <DialogTitle>Save vector layer as...<RoundClose c="#cc575d" /></DialogTitle>
      <DialogBody>
        <TopForm>
          <Row $h={21} $mb={6}><Label $w={79}>Format</Label><Combo w={472}>ESRI Shapefile</Combo></Row>
          <Row $h={27} $mb={6}>
            <Label $w={79}>File name</Label>
            <Box $w={389} $align="flex-end" $pad={2}><Tail>s/texas_blockgroup_shapefiles/bexar_county_shapefile_UTM.shp</Tail></Box>
            <Indent $w={6} />
            <PushButton $w={77} $h={27} $focus>Browse</PushButton>
          </Row>
          <Row $h={21} $mb={6}><Label $w={79}>Layer name</Label><Box $w={472} $off /></Row>
          <Row $h={22}>
            <Label $w={79}>CRS</Label><Combo w={448} h={22}>Project CRS (EPSG:26714 - NAD27 / UTM zone 14N)</Combo>
            <Indent $w={1} />
            <PushButton $w={23} $h={22}>
              <Pic w={16}><circle cx="7.500" cy="7.500" r="6.500" fill="#b8ccda" stroke="#7d93a5" /><path d="M1 7.500h13M7.500 1v13M3 4h9M3 11h9" stroke="#7d93a5" strokeWidth=".8" /><ellipse cx="7.500" cy="7.500" rx="3" ry="6.500" stroke="#7d93a5" strokeWidth=".8" /><rect x="8" y="8" width="8" height="8" rx="1" fill="#cca30e" /><path d="M10 14l4-4" stroke="#fff" strokeWidth="1.500" /></Pic>
            </PushButton>
          </Row>
        </TopForm>
        <Frame>
          <Row $h={21} $mb={9}><Label $w={277}>Encoding</Label><Combo w={270} pad={3}>System</Combo></Row>
          <Row $h={13} $mb={11}><Check $off /><Indent $w={5} /><Label $off>Save only selected features</Label></Row>
          <GroupHead $m="0 0 13px"><Right /><GroupName>Select fields to export and their export options</GroupName></GroupHead>
          <Row $h={13} $mb={10}><Check><Tick /></Check><Indent $w={5} /><Label>Add saved file to map</Label></Row>
          <Row $h={21} $mb={6}><Label $w={277}>Symbology export</Label><Combo w={270}>No symbology</Combo></Row>
          <Row $h={21} $mb={7}><Label $w={277} $off>Scale</Label><Spin w={270} off>1:50000</Spin></Row>
          <GroupHead $m="0 0 11px"><Right /><GroupName>Geometry</GroupName></GroupHead>
          <GroupHead $m="0 0 11px"><Right /><Indent $w={8} /><Check /><GroupName $pl={8}>Extent (current: layer)</GroupName></GroupHead>
          <GroupHead $m="0 0 -1px" $open><Indent $w={-2} /><Twist><path d="M0 0h11L5.500 7Z" fill="#333" /></Twist><GroupName $pl={8}>Layer Options</GroupName></GroupHead>
          <OptionBox>
            <Row $h={21} $mb={6}><Label $w={49}>RESIZE</Label><Combo w={475}>NO</Combo></Row>
            <Row $h={21}><Label $w={49}>SHPT</Label><Combo w={475} /></Row>
          </OptionBox>
          <GroupHead $m="8px 0 0"><Right /><GroupName>Custom Options</GroupName></GroupHead>
        </Frame>
        <DialogButtons>
          <PushButton $w={75}>OK</PushButton><PushButton $w={75}>Cancel</PushButton><PushButton $w={75}>Help</PushButton>
        </DialogButtons>
      </DialogBody>
    </Dialog>
  );
}
const Twist = styled.svg.attrs({ width: 11, height: 7, viewBox: "0 0 11 7" })`
  margin-left: -2px;
`;

function Bottom() {
  return (
    <TaskBar>
      <Launchers>
        <Pic w={22} h={4}><circle cx="3.500" cy="2" r="1.300" fill="#cdd3de" /><circle cx="11" cy="2" r="1.300" fill="#cdd3de" /><circle cx="18.500" cy="2" r="1.300" fill="#cdd3de" /></Pic>
        <Pic w={30}><rect x="2" y="2" width="26" height="26" rx="2" fill="url(#green)" /><path d="M15 5l1 7 5-4-3 5 7 2-7 1.500 3 5.500-5-3-1 7-1.500-7-5.500 3 4-5-7-2 7-2-4-5 5.500 3Z" fill="#e8f3e4" /><path d="M25 5 13.500 13 9 22l8-6.500Z" fill="#d23a2c" /><path d="M9 22l5-8 2 2Z" fill="#eee" /></Pic>
        <Pic w={30}><rect x="2" y="2" width="26" height="26" rx="1" fill="#8fb6e0" /><path d="M2 2h26v9H15L8 20 2 10Z" fill="#3d6fae" /><path d="M28 11v17H13l8-10Z" fill="#bdd4ec" /><circle cx="15" cy="15" r="7" fill="#e3edf8" /><circle cx="15" cy="15" r="5.500" fill="#4d83c8" /></Pic>
        <Pic w={30}><circle cx="15" cy="15" r="14" fill="url(#blue)" /><text x="15" y="21" textAnchor="middle" fontFamily="Liberation Serif" fontWeight="bold" fontSize="20" fill="#fff">R</text></Pic>
        <TerminalPic w={30} />
        <Pic w={30}><path d="M3 2h16l9 9v17H3Z" fill="#f3f3f3" stroke="#666" /><path d="M18 2h10v10Z" fill="#333" stroke="#777" /></Pic>
        <Pic w={30}><rect x="2" y="2" width="26" height="26" rx="1" fill="url(#metal)" /><path d="M5.500 4.500h19v9h-19ZM5.500 16.500h19v9h-19Z" fill="#dcdcdc" stroke="#aaa" /><path d="M11 9h8M11 21h8" stroke="#888" strokeWidth="2" /></Pic>
        <Pic w={30}><rect x="1" y="1" width="28" height="28" rx="4" fill="#4cbb4a" /><path d="M3 26Q1 8 9 5q5-3 8 3 8 3 9 12-1 7-9 8H6Z" fill="#0c0c08" /><path d="M8 6q5-3 8 4 8 1 9 9-1 8-8 8.500-5 0-6-5Q6 14 8 6Z" fill="#f3ec80" /><path d="M9 9l5-2M10 13l5-2" stroke="#111" strokeWidth="1.500" /><circle cx="14.500" cy="18" r="3.200" fill="#111" /><circle cx="22" cy="17.500" r="2.700" fill="#111" /><circle cx="15" cy="17" r="1.100" fill="#fff" /><circle cx="22.500" cy="17" r=".9" fill="#fff" /><path d="M14 23.500q5 3 8-1M18 9l3-5M22 11l4-5" stroke="#111" strokeWidth="1.200" /></Pic>
        <Pic w={30}><ellipse cx="12" cy="11" rx="8.500" ry="9" fill="#6b7b8c" stroke="#e52ba4" strokeWidth="3" /><path d="M12 20v9M8.500 25h7M24.500 5v14M24.500 22v3.500" stroke="#e52ba4" strokeWidth="3" /><path d="M8 7h3v4H7v4M13 6h4M13 10v5M16 13h2" stroke="#27313c" strokeWidth="1.500" /></Pic>
      </Launchers>
      <Divider />
      <Task><TerminalPic w={20} />carlos@carlo...</Task>
      <Task $gap={4}><Pic w={20}><QgisShape /></Pic>QGIS 2.18.19</Task>
      <Task><PaintPic />[shot-2018-...</Task>
      <Task><PaintPic />[shot-2018-...</Task>
      <Tray>
        <Pic w={36} h={34}><rect width="36" height="34" fill="#3b3d40" /><rect x="3" y="2" width="30" height="29" rx="3" fill="#16191e" /><path d="M8 22h4v5H8ZM13 18h4v9h-4ZM18 13h4v14h-4Z" fill="url(#metal)" /><path d="M24 7h4v20h-4Z" fill="#4c4e52" /></Pic>
        <Indent $w={11} />
        <Pic w={34} h={34}><path d="M1 1h7q9-3 18 0h7v7q-3 9 0 18v7h-7q-9 3-18 0H1v-7q3-9 0-18Z" fill="#8a8c8f" /><circle cx="17" cy="17" r="15" fill="url(#cone)" stroke="#2a2a2a" strokeWidth="1.500" /><circle cx="17" cy="17" r="6" stroke="#111" strokeWidth="2" /><circle cx="12" cy="16.500" r=".9" fill="#2d8cff" /><circle cx="21" cy="16.500" r=".9" fill="#2d8cff" /><circle cx="4" cy="4" r="1.800" fill="#ddd" /><circle cx="30" cy="4" r="1.800" fill="#ddd" /><circle cx="4" cy="30" r="1.800" fill="#ddd" /><circle cx="30" cy="30" r="1.800" fill="#ddd" /></Pic>
        <Indent $w={6} />
        <Pic w={32} h={31}><rect width="32" height="31" rx="3" fill="#15191e" /><path d="M10 7h3V4h6v3h3q2 0 2 2v14q0 2-2 2H10q-2 0-2-2V9q0-2 2-2Z" fill="#e4e4e4" /><rect x="11.500" y="10" width="9.500" height="12" fill="#15191e" /></Pic>
        <Pager $ml={8} $active>
          <svg width="58" height="29" viewBox="0 0 58 29"><rect x="15" y="1" width="26" height="26" fill="#3b95f5" /><g fill="none" transform="translate(20 4)"><QgisShape /></g><g fill="none" transform="translate(39 4) scale(.85 1)"><QgisShape /></g></svg>
        </Pager>
        <Pager $ml={3} />
        <Clock><span>1</span><span>0</span><span>:</span><span>4</span><span>0</span></Clock>
        <Meridiem>AM</Meridiem>
        <Pic w={26}><path d="M7 5A10.500 10.500 0 1 0 19 5" stroke="#d8dce6" strokeWidth="3.600" /><path d="M13 1v12" stroke="#d8dce6" strokeWidth="4" /></Pic>
        <Indent $w={12} />
        <Pic w={26} h={30}><path d="M9 0h8v3H9Z" fill="#e4e4e4" /><rect x="2" y="3" width="22" height="3" fill="#d5d5d5" /><path d="M3 6h20v14H3Z" fill="#1d1f24" /><path d="M3 6h2v21H3ZM21 6h2v21h-2Z" fill="#777" /><path d="M5 21h16v6H5Z" fill="#b84c92" /><rect x="1" y="26" width="24" height="3" fill="#cfcfcf" /></Pic>
      </Tray>
    </TaskBar>
  );
}

export default function App() {
  return (
    <Desktop>
      <Global />
      <Defs />
      <TitleBar>
        QGIS 2.18.19
        <WindowButtons>
          <Pic w={8} h={3}><rect width="7" height="2.500" fill="#666a77" /></Pic>
          <Pic w={8} h={8}><path d="M3 0h5v5ZM0 3v5h5Z" fill="#666a77" /></Pic>
          <RoundClose c="#666a77" />
        </WindowButtons>
      </TitleBar>
      <AppWindow>
        <MenuBar>{menus.map(([a, b, c]) => <span key={a + b + c}>{a}<u>{b}</u>{c}</span>)}</MenuBar>
        <TopToolbars />
        <Body>
          <SideBar>
            <Handle $flat $m="2px 0 3px 4px" />
            {sideTools.map((t, i) => (
              <SideSlot key={i}><Pic>{t.pic}{t.star ? <Star /> : <Plus />}</Pic>{t.menu && <Down />}</SideSlot>
            ))}
            <SideEnd><Handle $flat $m="2px 0 0 4px" /></SideEnd>
          </SideBar>
          <Panels />
          <Canvas><CountyMap /></Canvas>
        </Body>
        <Status />
      </AppWindow>
      <Bottom />
      <SaveDialog />
    </Desktop>
  );
}
